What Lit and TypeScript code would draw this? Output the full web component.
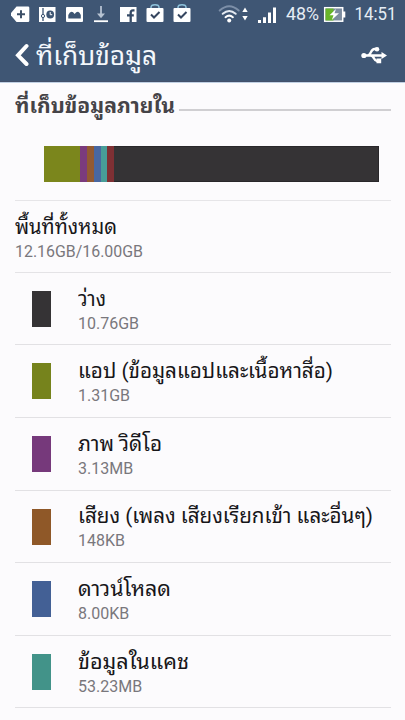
import { LitElement, html, css, svg } from "lit";
import { customElement, property } from "lit/decorators.js";

interface Category {
  name: string;
  size: string;
  color: string;
  width: number;
}

const CATEGORIES: Category[] = [
  { name: "ว่าง", size: "10.76GB", color: "#353335", width: 28 },
  { name: "แอป (ข้อมูลแอปและเนื้อหาสื่อ)", size: "1.31GB", color: "#76831c", width: 255 },
  { name: "ภาพ วิดีโอ", size: "3.13MB", color: "#76397b", width: 84 },
  { name: "เสียง (เพลง เสียงเรียกเข้า และอื่นๆ)", size: "148KB", color: "#8f5828", width: 295 },
  { name: "ดาวน์โหลด", size: "8.00KB", color: "#436095", width: 93 },
  { name: "ข้อมูลในแคช", size: "53.23MB", color: "#429389", width: 111 },
];

const SEGMENTS = [
  { color: "#7b861c", width: 36 },
  { color: "#7b3b7d", width: 7 },
  { color: "#935a31", width: 6.5 },
  { color: "#4967a0", width: 7 },
  { color: "#489d98", width: 6.5 },
  { color: "#7f3034", width: 7 },
];

/** A line of text drawn to a given advance width. */
@customElement("fit-text")
class FitText extends LitElement {
  @property() text = "";
  @property({ type: Number }) width = 0;
  static styles = css`
    :host { display: block; white-space: nowrap; }
    .line { display: inline-block; transform-origin: 0 50%; }
  `;
  render() {
    return html`<span class="line">${this.text}</span>`;
  }
  updated() {
    const line = this.renderRoot.querySelector(".line") as HTMLElement;
    line.style.transform = "none";
    const natural = line.getBoundingClientRect().width;
    if (natural && this.width) line.style.transform = `scaleX(${this.width / natural})`;
  }
}

@customElement("status-bar")
class StatusBar extends LitElement {
  static styles = css`
    :host { display: block; height: 28px; }
    svg { display: block; }
    text { font-family: Roboto, "Liberation Sans", sans-serif; font-size: 19px; font-weight: 400; fill: #e6edf5; }
  `;
  bag(x: number) {
    return svg`<g transform="translate(${x} 0)">
      <path d="M5 9V7.500Q5 4.800 9 4.800T13 7.500V9" fill="none" stroke="#8fc3dc" stroke-width="1.500"/>
      <rect x="0.500" y="8" width="17" height="14" rx="1" fill="#fff"/>
      <path d="M5 14.500l3 3 5.500-5.500" fill="none" stroke="#35465f" stroke-width="2"/></g>`;
  }
  render() {
    return html`<svg width="405" height="28" viewBox="0 0 405 28">
      <path d="M16.500 6.500H28q1.300 0 1.300 1.300V20.700q0 1.300-1.300 1.300H16.500L11 15.500V13Z" fill="#fff"/>
      <path d="M17 14.300h8M21 10.300v8" stroke="#3d5068" stroke-width="2"/>
      <rect x="39" y="7" width="16.500" height="15" fill="#fff"/>
      <path d="M43 8v13" stroke="#3d5573" stroke-width="1.300"/>
      <circle cx="43" cy="16" r="1.600" fill="#fff" stroke="#3d5573"/>
      <circle cx="50.200" cy="14.500" r="3.900" fill="#3d5573"/>
      <path d="M50.200 12v2.700h2" stroke="#fff" fill="none"/>
      <rect x="66" y="7" width="17" height="15" rx="1" fill="#fff"/>
      <path d="M68.300 18.500v-3.500q1.500-3.300 3.300-3.300 1.500 0 3 2.300 1.800-2.500 3.500-2.300 1.500.3 2.700 3.300v3.500Z" fill="#3d5573"/>
      <path d="M101 6v11" stroke="#a9b6c8" stroke-width="2"/>
      <path d="M97 13.500h8l-4 4.800Z" fill="#b7c3d2"/>
      <path d="M94 21.200h14" stroke="#fff" stroke-width="1.800"/>
      <rect x="120" y="7" width="16.500" height="15" fill="#fff"/>
      <path d="M134.500 10.300h-1.500q-2.300 0-2.300 2.500V22M127 15.300h6.800" fill="none" stroke="#354a66" stroke-width="2.300"/>
      ${this.bag(146)}${this.bag(173)}
      <g fill="none" stroke-width="2" stroke-linecap="round">
        <path d="M219.700 10.500q9.500-8.500 19 0" stroke="#7d8fa8"/>
        <path d="M222.700 13.800q6.500-5.600 13 0" stroke="#e4eaf2"/>
        <path d="M225.500 17.200q3.700-3.200 7.400 0" stroke="#fff"/>
      </g>
      <circle cx="229.200" cy="20.500" r="2" fill="#fff"/>
      <path d="M245 7.500l2.700 4.500h-5.400ZM245 20.500l2.700-4.500h-5.400Z" fill="#fff"/>
      <path d="M258 20h3v3h-3ZM263 17.200h3V23h-3ZM268 12.500h3V23h-3ZM273 7.500h3V23h-3Z" fill="#fff"/>
      <text x="286" y="20.300" textLength="33" lengthAdjust="spacingAndGlyphs">48%</text>
      <rect x="324.700" y="7.700" width="18" height="13.500" fill="#7b8b9f" stroke="#fff" stroke-width="1.500"/>
      <rect x="325.500" y="8.500" width="8" height="12" fill="#68b52a"/>
      <path d="M343 11.500h2.300v6H343Z" fill="#fff"/>
      <path d="M336 9l-6.500 6.300h4L331.800 20l7.200-6.800h-4.500Z" fill="#fff"/>
      <text x="354.500" y="20.300" textLength="42" lengthAdjust="spacingAndGlyphs">14:51</text>
    </svg>`;
  }
}

@customElement("app-root")
class AppRoot extends LitElement {
  static styles = css`
    :host {
      display: block; width: 405px; height: 720px; overflow: hidden;
      background: #fcfbfd; color: #171619;
      font-family: Roboto, "Droid Sans Thai", "Noto Sans Thai Looped", Loma, Waree, Garuda, "Noto Sans Thai", "Noto Sans", sans-serif;
    }
    .top { height: 82px; box-sizing: border-box; background: #3f5674; border-bottom: 1px solid #43506a; }
    .bar { display: flex; align-items: center; height: 53px; padding: 0 18px 0 15px; box-sizing: border-box; }
    .back { flex: none; margin-right: 7px; }
    .title { flex: 1; font-size: 26px; line-height: 40px; margin-top: 2px; color: #f4f8fc; }
    .content { height: 638px; padding: 0 14px 0 15px; box-sizing: border-box; border-top: 1px solid #c0d0e3; }
    .section { display: flex; align-items: center; gap: 4px; height: 49px; }
    .heading { flex: none; width: 160px; font-size: 20px; line-height: 30px; font-weight: 700; color: #454347; margin-top: -3px; }
    .rule { flex: 1; height: 2px; margin-top: 5px; background: #d0cfd2; }
    .usage { height: 68.600px; padding: 13.600px 12px 0 29px; box-sizing: border-box; border-bottom: 1px solid #e6e5e8; }
    .meter { display: flex; height: 36px; background: #353335; box-shadow: inset 0 0 0 1px #29272a; }
    .segment { flex: none; }
    .total { height: 72.200px; padding-top: 11px; box-sizing: border-box; border-bottom: 1px solid #e4e3e6; }
    .row { display: flex; height: 72.600px; box-sizing: border-box; border-bottom: 1px solid #e2e1e4; }
    .swatch { flex: none; width: 18.500px; height: 36px; margin: 18px 27.200px 0 17.300px; }
    .words { padding-top: 10.800px; }
    .name { font-size: 20.500px; line-height: 30px; height: 30px; }
    .size { font-size: 16px; line-height: 20px; color: #79777c; font-weight: 400; }
  `;
  render() {
    return html`
      <header class="top">
        <status-bar></status-bar>
        <div class="bar">
          <svg class="back" width="14" height="24" viewBox="0 0 14 24">
            <path d="M11.500 3L3 12.300l8.500 8.700" fill="none" stroke="#fff" stroke-width="4" stroke-linecap="round"/>
          </svg>
          <fit-text class="title" text="ที่เก็บข้อมูล" .width=${121}></fit-text>
          <svg width="26" height="18" viewBox="0 0 26 18">
            <g fill="none" stroke="#fff" stroke-width="2.300">
              <path d="M3 9.500h19M6.500 9.500c3.500 0 3-6.500 7-6.500h2M9.500 9.500c4 0 3 5.500 6.500 5.500h2"/>
            </g>
            <circle cx="2.900" cy="9.500" r="2.600" fill="#fff"/>
            <circle cx="16" cy="3.300" r="2.300" fill="#fff"/>
            <path d="M20.500 6L26 9.500 20.500 13ZM15.500 12.600h4.700v4.700h-4.700Z" fill="#fff"/>
          </svg>
        </div>
      </header>
      <main class="content">
        <div class="section">
          <fit-text class="heading" text="ที่เก็บข้อมูลภายใน" .width=${160}></fit-text>
          <div class="rule"></div>
        </div>
        <div class="usage">
          <div class="meter">
            ${SEGMENTS.map((s) => html`<div class="segment" style="width:${s.width}px;background:${s.color}"></div>`)}
          </div>
        </div>
        <div class="total">
          <fit-text class="name" text="พื้นที่ทั้งหมด" .width=${102}></fit-text>
          <fit-text class="size" text="12.16GB/16.00GB" .width=${128}></fit-text>
        </div>
        ${CATEGORIES.map(
          (c) => html`<div class="row">
            <div class="swatch" style="background:${c.color}"></div>
            <div class="words">
              <fit-text class="name" .text=${c.name} .width=${c.width}></fit-text>
              <div class="size">${c.size}</div>
            </div>
          </div>`
        )}
      </main>`;
  }
}
